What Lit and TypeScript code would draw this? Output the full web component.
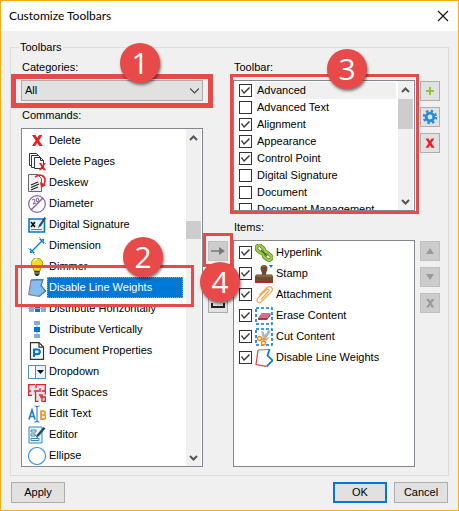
import { LitElement, html, svg, css, TemplateResult } from "lit";
import { customElement, property } from "lit/decorators.js";
import { classMap } from "lit/directives/class-map.js";

const redCross = (x: number, y: number, s: number) => svg`
  <g transform="translate(${x} ${y}) scale(${s})">
    <path fill="#ed1c24" d="M0 0h3.4l1.8 3L7.2 0h3.2L7 5.4 10.8 11H7.2L5.2 7.8 3.2 11H0L3.6 5.5z"/>
  </g>`;

const glyphs: Record<string, TemplateResult> = {
  delete: svg`${redCross(4, 3, 1)}`,
  deletePages: svg`
    <g fill="#fff" stroke="#333">
      <path d="M1.5.5h7l2 2v10h-9z"/><path d="M3.5 2.5h7l2 2v10h-9z"/><path d="M6.500 4.500h6l3 3v8h-9z"/>
      <path d="M12.500 4.500v3h3" fill="none"/>
    </g>${redCross(11, 10, 0.65)}`,
  deskew: svg`
    <path d="M.5.5h9l4 4v13H.5z" fill="#f3f3f3" stroke="#666"/>
    <path d="M3 11l7-3M3 13.500l8-3.500M3 16l7-3" stroke="#222" stroke-width="1.200"/>
    <path d="M7 3c5-4 10-1 10 3 0 3-1 5-3 6" fill="none" stroke="#ed1c24" stroke-width="1.600"/>
    <path d="M12 8l1 6 5-3z" fill="#ed1c24"/>`,
  diameter: svg`
    <circle cx="9" cy="9" r="8.300" fill="#fff" stroke="#8560a8" stroke-width="1.200"/>
    <path d="M3 15L15 3" stroke="#8560a8" stroke-width="1.400"/>
    <path d="M4 5l2-1 1 2-2 3 3-1M8 4l2-1 1 3-2 1z" fill="none" stroke="#8560a8" stroke-width="1"/>`,
  signature: svg`
    <path d="M1 3h15.500v13H1z" fill="#e9f1f6" stroke="#0b74c4" stroke-width="1.600"/>
    <path d="M3 6l4 5M7 6l-4 5" stroke="#111" stroke-width="1.700"/>
    <path d="M3 13.500h11" stroke="#777"/>
    <path d="M16.500 1L11 9l-1 3 3-2 5-8z" fill="#174f7c"/>`,
  dimension: svg`
    <path d="M4 14L14 4" stroke="#0078d7" stroke-width="1.200"/>
    <path d="M2 11v5h5zM11 2h5v5z" fill="#0078d7"/>
    <path d="M0 11l7 7M11 0l7 7" stroke="#6bb2e6" stroke-width="1"/>`,
  dimmer: svg`
    <path d="M9 0a5.700 5.700 0 0 1 5.700 5.700C14.700 9 12 10 12 13H6c0-3-2.700-4-2.700-7.300A5.700 5.700 0 0 1 9 0z" fill="#f8dc16" stroke="#8b7a1f" stroke-width=".8"/>
    <path d="M6 3a4 4 0 0 1 3-2" stroke="#fffbd0" stroke-width="1.500" fill="none"/>
    <path d="M6.300 13h5.400v3L10 18H8l-1.700-2z" fill="#333"/><path d="M6 15h6" stroke="#aaa"/>`,
  lineWeights: svg`
    <path d="M3 1l12-1-2 6.500 5 5.500-7 5.500L.5 16z" fill="#85bdec"/>
    <path d="M3 1l12-.5-2 6 4.500 5.500-6.500 5.500" fill="none" stroke="#3d80b8" stroke-width="1.300"/>
    <path d="M3 1L.7 15.500 11 17.400" fill="none" stroke="#a17599" stroke-width="1.200"/>`,
  distH: svg`
    <path d="M1 6h5v6H1zM13 6h5v6h-5z" fill="#88add3"/><path d="M7 6h5v6H7z" fill="#0078d7"/>
    <path d="M0 8.500h18" stroke="#88add3"/>`,
  distV: svg`
    <path d="M9 2v14" stroke="#88add3"/>
    <path d="M6 0h6v4H6zM6 13h6v4H6z" fill="#88add3"/><path d="M6 6h6v5H6z" fill="#0078d7"/>`,
  docProps: svg`
    <path d="M2.500.6H11l4.500 4.500v12.300h-13z" fill="#fff" stroke="#333" stroke-width="1.200"/>
    <path d="M11 .6v4.500h4.500" fill="none" stroke="#333" stroke-width="1.200"/>
    <path d="M6 15V7.500h3.500a2.300 2.300 0 0 1 0 4.600H6" fill="none" stroke="#0078d7" stroke-width="2.200"/>`,
  dropdown: svg`
    <path d="M.5 2.500h17v13H.5z" fill="#e8f1f7" stroke="#4a90c4"/><path d="M7.500 3v12" stroke="#4a90c4"/>
    <path d="M1 3h6v12H1z" fill="#fff"/><path d="M9 7h7l-3.500 4z" fill="#111"/>`,
  spaces: svg`
    <path d="M1 1h16v16H8v-6H1z" fill="#dbe5ee"/>
    <path d="M7 .7H.7v10.600H4m4-10.600V4m0-3.300h9.300v10M.7 7H3m3 0h5M7.500 8v9.300h3M12 4v4m2-1h3.300M11 11h3v6.300h3.300V13H12" fill="none" stroke="#ed1c24" stroke-width="1.300"/>`,
  editText: svg`
    <path d="M1 14.500L4 5l3 9.500M2 11.500h4" fill="none" stroke="#2380c4" stroke-width="1.700"/>
    <path d="M6.500 1c1.500 0 2.500.3 2.500 1.500v13c0 1-1 1.500-2.500 1.500M11.500 1C10 1 9 1.300 9 2.500v13c0 1 1 1.500 2.500 1.500" fill="none" stroke="#2380c4" stroke-width="1.100"/>
    <path d="M13 6h2.200a2 2 0 0 1 0 4H13h2.500a2 2 0 0 1 0 4.200H13z" fill="none" stroke="#f59322" stroke-width="1.700"/>`,
  editor: svg`
    <path d="M1 1h13v16H1z" fill="#eaf3f8" stroke="#3987ba"/>
    <path d="M3 4h5v2H3zM3 8h4v2H3zM3 12.500h8v2H3zM7 9l3 3" fill="#fff" stroke="#3987ba"/>
    <path d="M17.500 2.500L11 10l-3 1.500 1-3L15.500 1z" fill="#174f7c"/>`,
  ellipse: svg`<circle cx="9" cy="9" r="8.500" fill="#fff" stroke="#3f97da" stroke-width="1.100"/>`,
  hyperlink: svg`
    <g fill="none" stroke="#4d7d1d" stroke-width="3.600"><rect x="1" y="2.500" width="9" height="5.500" rx="2.700" transform="rotate(42 5.500 5.200)"/><rect x="8" y="9.500" width="9" height="5.500" rx="2.700" transform="rotate(42 12.500 12.200)"/></g>
    <g fill="none" stroke="#9dcc49" stroke-width="2.200"><rect x="1" y="2.500" width="9" height="5.500" rx="2.700" transform="rotate(42 5.500 5.200)"/><rect x="8" y="9.500" width="9" height="5.500" rx="2.700" transform="rotate(42 12.500 12.200)"/></g>
    <path d="M6 6l6 6" stroke="#3f6a18" stroke-width="1.600"/>`,
  stamp: svg`
    <path d="M9 0a3.500 3.500 0 0 1 3.500 3.500c0 2-1.500 3-1.500 6h6l1 2v5H0v-5l1-2h6c0-3-1.500-4-1.500-6A3.500 3.500 0 0 1 9 0z" fill="#6e4b31"/>
    <path d="M7 2c1-1 2-1 3-.5M1 11h16" stroke="#a37a58" fill="none"/><path d="M0 16h18v2H0z" fill="#b7242b"/>
    <path d="M14 0h4l-2 3z" fill="#0078d7"/>`,
  attachment: svg`
    <path d="M6 13.500l7.500-8c1.300-1.500-.5-3.300-2-1.900L3 12c-2.500 2.800.7 6.200 3.500 3.500l9.700-9.700c3-3.200-1-7-4.200-4.100L4.500 9" fill="none" stroke="#f2a654" stroke-width="1.200"/>`,
  erase: svg`
    <rect x="1" y="1" width="16" height="16" fill="none" stroke="#0078d7" stroke-width="1.600" stroke-dasharray="3 2"/>
    <path d="M6.500 6h9L12 11H3z" fill="#cf7389"/><path d="M3 11h9l3.500-5v2.500L12 13H3z" fill="#954156"/>`,
  cut: svg`
    <rect x="1" y="1" width="16" height="16" fill="none" stroke="#0078d7" stroke-width="1.600" stroke-dasharray="3 2"/>
    <path d="M8 10l6-9 1.500 3-5 7zM8 11L6 3l2.500 1L11 10l4-1-4 4z" fill="#aeb6bb"/>
    <g fill="none" stroke="#f59322" stroke-width="1.600"><circle cx="4.500" cy="10.500" r="2"/><circle cx="8.500" cy="15" r="2"/><path d="M6 11l3 0v3"/></g>`,
  lineWeightsOff: svg`
    <path d="M3 1L1 15.500 11 17.400" fill="none" stroke="#ed3941" stroke-width="1.200"/>
    <path d="M3 1l12-.5" stroke="#8a6ea5" fill="none"/><path d="M14.500.5l-2 6 5 5-6 6" fill="none" stroke="#0078d7" stroke-width="1.700"/>`,
};

const icon = (name: string) =>
  html`<svg class="icon" viewBox="0 0 18 18" aria-hidden="true">${glyphs[name]}</svg>`;

const commands: [string, string][] = [
  ["delete", "Delete"], ["deletePages", "Delete Pages"], ["deskew", "Deskew"],
  ["diameter", "Diameter"], ["signature", "Digital Signature"], ["dimension", "Dimension"],
  ["dimmer", "Dimmer"], ["lineWeights", "Disable Line Weights"],
  ["distH", "Distribute Horizontally"], ["distV", "Distribute Vertically"],
  ["docProps", "Document Properties"], ["dropdown", "Dropdown"], ["spaces", "Edit Spaces"],
  ["editText", "Edit Text"], ["editor", "Editor"], ["ellipse", "Ellipse"],
];

const toolbars: [string, boolean][] = [
  ["Advanced", true], ["Advanced Text", false], ["Alignment", true], ["Appearance", true],
  ["Control Point", true], ["Digital Signature", false], ["Document", false],
  ["Document Management", false],
];

const items: [string, string][] = [
  ["hyperlink", "Hyperlink"], ["stamp", "Stamp"], ["attachment", "Attachment"],
  ["erase", "Erase Content"], ["cut", "Cut Content"], ["lineWeightsOff", "Disable Line Weights"],
];

@customElement("step-badge")
export class StepBadge extends LitElement {
  @property() step = "";
  static styles = css`
    :host {
      display: grid;
      place-items: center;
      width: 40px;
      height: 40px;
      border-radius: 50%;
      background: #e84a4a;
      color: #fff;
      font: 30px/40px "Open Sans", "Noto Sans", sans-serif;
      box-shadow: 1px 2px 3px rgba(0, 0, 0, 0.5);
    }
  `;
  render() {
    return html`<span>${this.step}</span>`;
  }
}

@customElement("scroll-bar")
export class ScrollBar extends LitElement {
  static styles = css`
    :host {
      display: flex;
      flex-direction: column;
      justify-content: space-between;
      width: 15px;
      background: #f0f0f0;
      position: relative;
    }
    svg { width: 15px; height: 17px; fill: none; stroke: #555; stroke-width: 2; }
    .thumb {
      position: absolute;
      left: 0;
      right: 0;
      top: var(--thumb-top);
      height: var(--thumb-size);
      background: #cdcdcd;
    }
  `;
  render() {
    return html`
      <svg viewBox="0 0 15 17"><path d="M4 11l3.500-3.500L11 11" /></svg>
      <div class="thumb"></div>
      <svg viewBox="0 0 15 17"><path d="M4 7l3.500 3.500L11 7" /></svg>
    `;
  }
}

@customElement("app-root")
export class AppRoot extends LitElement {
  static styles = css`
    :host {
      display: block;
      color: #000;
      font: 11px/17px "Liberation Sans", Arial, sans-serif;
    }
    * { box-sizing: border-box; }
    .dialog {
      display: flex;
      flex-direction: column;
      min-height: 100vh;
      border: 1px solid #f5ae0b;
      background: #f0f0f0;
    }
    header {
      display: flex;
      align-items: center;
      justify-content: space-between;
      height: 30px;
      padding: 0 9px 0 8px;
      background: #fff;
    }
    h1 { margin: 0; font: 12px/18px Lato, "Noto Sans", sans-serif; }
    button {
      font: inherit;
      color: inherit;
      padding: 0;
      border: 1px solid #adadad;
      background: #e1e1e1;
    }
    .close { width: 12px; height: 12px; border: 0; background: none; display: grid; }
    .close svg { width: 12px; height: 12px; stroke: #111; stroke-width: 1.100; }
    fieldset {
      flex: 1;
      display: flex;
      min-width: 0;
      margin: 8px 9px 0;
      padding: 3px 8px 8px 10px;
      border: 1px solid #dcdcdc;
    }
    legend { margin-left: -2px; padding: 0 1px; }
    .columns { flex: 1; display: flex; gap: 5px; min-width: 0; }
    .column { flex: 1; display: flex; flex-direction: column; min-width: 0; }
    .column > label, .caption { margin: 0 0 4px 1px; }
    .middle, .side { width: 20px; display: flex; flex-direction: column; gap: 6px; }
    .middle { padding-top: 182px; gap: 32px; }
    .side { padding-top: 22px; }
    .spacer { height: 76px; }
    .anchor { position: relative; display: flex; }
    .mark { position: absolute; border: 3px solid #e84a4a; pointer-events: none; z-index: 1; }
    step-badge { position: absolute; z-index: 2; }
    .mark-category { inset: -6px -10px -7px; border-width: 5px; }
    .mark-command { inset: -12px -8px -9px; }
    .mark-toolbar { inset: -6px -4px -3px -3px; }
    .mark-transfer { inset: -8px -5px -6px; }
    .badge-category { left: 99px; top: -37px; }
    .badge-command { left: 100px; top: -40px; }
    .badge-toolbar { left: 94px; top: -31px; }
    .badge-transfer { left: -8px; top: 21px; }
    select {
      width: 100%;
      height: 21px;
      appearance: none;
      padding: 0 3px;
      border: 1px solid #adadad;
      border-radius: 0;
      background: #e1e1e1;
      font: inherit;
      color: inherit;
    }
    .chevron { position: absolute; right: 4px; top: 6px; width: 9px; height: 9px; fill: none; stroke: #444; stroke-width: 1.200; }
    .category { margin-bottom: 6px; }
    .list {
      flex: 1;
      display: flex;
      min-width: 0;
      padding: 0 1px;
      border: 1px solid #828790;
      background: #fff;
    }
    ul { flex: 1; min-width: 0; margin: 0; padding: 1px 0 0; list-style: none; }
    .icon { width: 18px; height: 18px; flex: none; }
    .command { position: relative; display: flex; align-items: center; height: 21px; padding: 0 3px 0 5px; gap: 1px; }
    .command .text { flex: 1; height: 21px; line-height: 21px; padding-left: 2px; }
    .selected .text { color: #fff; background: #0078d7; outline: 1px dotted #ff8728; outline-offset: -1px; }
    .commands { --thumb-top: 92px; --thumb-size: 18px; }
    .toolbars { height: 131px; overflow: hidden; --thumb-top: 18px; --thumb-size: 30px; }
    .toolbar-area { margin-bottom: 8px; }
    .row { display: flex; align-items: center; height: 17px; padding: 0 2px 0 4px; gap: 3px; white-space: nowrap; }
    .row .text { flex: 1; padding-left: 2px; }
    .current .text { background: #f0f0f0; }
    .item { height: 21px; }
    .item .text { padding-left: 0; }
    input {
      appearance: none;
      flex: none;
      width: 13px;
      height: 13px;
      margin: 0;
      border: 1px solid #333;
      background: #fff;
      display: grid;
    }
    input:checked::before {
      content: "";
      width: 11px;
      height: 11px;
      background: #333;
      clip-path: polygon(1px 5px, 2px 4px, 4px 7px, 9px 2px, 10px 3px, 4px 9px);
    }
    .tool { width: 20px; height: 20px; display: grid; place-items: center; flex: none; }
    .tool svg { width: 18px; height: 18px; }
    .off { background: #ccc; border-color: #bfbfbf; }
    footer { display: flex; gap: 7px; padding: 6px 10px 7px; }
    footer button { width: 54px; height: 21px; line-height: 19px; }
    footer .apply { margin-right: auto; }
    footer .ok { border: 2px solid #0078d7; line-height: 17px; }
  `;

  private tool(label: string, shape: TemplateResult, off = false) {
    return html`<button class=${classMap({ tool: true, off })} aria-label=${label}>
      <svg viewBox="0 0 18 18">${shape}</svg>
    </button>`;
  }

  render() {
    return html`
      <div class="dialog" role="dialog" aria-labelledby="title">
        <header>
          <h1 id="title">Customize Toolbars</h1>
          <button class="close" aria-label="Close">
            <svg viewBox="0 0 12 12"><path d="M1 1l10 10M11 1L1 11" /></svg>
          </button>
        </header>
        <fieldset>
          <legend>Toolbars</legend>
          <div class="columns">
            <div class="column">
              <label for="category">Categories:</label>
              <div class="anchor category">
                <select id="category"><option>All</option></select>
                <svg class="chevron" viewBox="0 0 9 9"><path d="M0 2.500l4.500 4.500L9 2.500" /></svg>
                <div class="mark mark-category"></div>
                <step-badge class="badge-category" step="1"></step-badge>
              </div>
              <div class="caption" id="commands">Commands:</div>
              <div class="list commands">
                <ul role="listbox" aria-labelledby="commands">
                  ${commands.map(([name, text]) => {
                    const selected = name === "lineWeights";
                    return html`<li class=${classMap({ command: true, selected })} role="option" aria-selected=${selected}>
                      ${icon(name)}<span class="text">${text}</span>
                      ${selected
                        ? html`<div class="mark mark-command"></div>
                            <step-badge class="badge-command" step="2"></step-badge>`
                        : ""}
                    </li>`;
                  })}
                </ul>
                <scroll-bar></scroll-bar>
              </div>
            </div>
            <div class="middle">
              <div class="anchor">
                ${this.tool("Add to toolbar", svg`<path d="M2 9h12" stroke="#777" stroke-width="1.500"/><path d="M10 5l6 4-6 4z" fill="#777"/>`, true)}
                <div class="mark mark-transfer"></div>
                <step-badge class="badge-transfer" step="4"></step-badge>
              </div>
              ${this.tool("Add separator", svg`<path d="M3 9v4h12V9" fill="none" stroke="#222" stroke-width="2"/>`)}
            </div>
            <div class="column">
              <div class="caption" id="toolbars">Toolbar:</div>
              <div class="anchor toolbar-area">
                <div class="list toolbars">
                  <ul aria-labelledby="toolbars">
                    ${toolbars.map(([text, on], i) => html`<li>
                      <label class=${classMap({ row: true, current: i === 0 })}>
                        <input type="checkbox" .checked=${on} /><span class="text">${text}</span>
                      </label>
                    </li>`)}
                  </ul>
                  <scroll-bar></scroll-bar>
                </div>
                <div class="mark mark-toolbar"></div>
                <step-badge class="badge-toolbar" step="3"></step-badge>
              </div>
              <div class="caption" id="items">Items:</div>
              <div class="list">
                <ul aria-labelledby="items">
                  ${items.map(([name, text]) => html`<li>
                    <label class="row item">
                      <input type="checkbox" .checked=${true} />${icon(name)}<span class="text">${text}</span>
                    </label>
                  </li>`)}
                </ul>
              </div>
            </div>
            <div class="side">
              ${this.tool("New toolbar", svg`<path d="M8 5h2v3h3v2h-3v3H8v-3H5V8h3z" fill="#8cc63f"/>`)}
              ${this.tool("Toolbar settings", svg`
                <circle cx="9" cy="9" r="6" fill="none" stroke="#2a8bdc" stroke-width="2.400" stroke-dasharray="2.400 2.312"/>
                <circle cx="9" cy="9" r="3.800" fill="#d6e8f6" stroke="#2a8bdc" stroke-width="2.800"/>`)}
              ${this.tool("Delete toolbar", redCross(4.5, 4.5, 0.85))}
              <div class="spacer"></div>
              ${this.tool("Move up", svg`<path d="M5 12l4-6 4 6z" fill="#9a9a9a"/>`, true)}
              ${this.tool("Move down", svg`<path d="M5 6h8l-4 6z" fill="#9a9a9a"/>`, true)}
              ${this.tool("Remove item", svg`<path d="M5 5h3l1.300 2.300L10.800 5h2.700l-3 4.300 3 4.200h-2.900L9.200 11l-1.500 2.500H5l3-4.200z" fill="#9a9a9a"/>`, true)}
            </div>
          </div>
        </fieldset>
        <footer>
          <button class="apply">Apply</button>
          <button class="ok">OK</button>
          <button>Cancel</button>
        </footer>
      </div>
    `;
  }
}
